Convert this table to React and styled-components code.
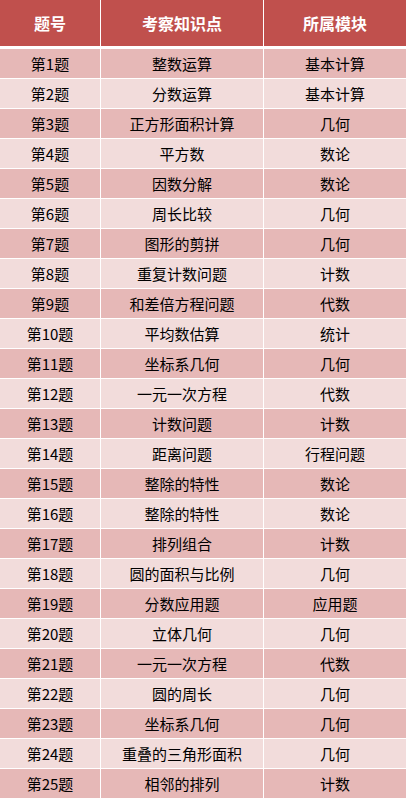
import React from "react";
import styled, { createGlobalStyle } from "styled-components";

const GlobalStyle = createGlobalStyle`
	body {
		margin: 0;
		background: #ffffff;
		font-family: "Noto Sans CJK SC", "Noto Sans", sans-serif;
	}
`;

const Table = styled.div`
	width: 406px;
	display: grid;
	grid-template-columns: 100px 162px 142px;
	column-gap: 1px;
	row-gap: 1px;
	background: #ffffff;
`;

const HeadCell = styled.div`
	height: 46px;
	margin-bottom: 2px;
	display: flex;
	align-items: center;
	justify-content: center;
	background: #c0504d;
	color: #ffffff;
	font-size: 16px;
	font-weight: 700;
`;

const Cell = styled.div`
	height: 29px;
	display: flex;
	align-items: center;
	justify-content: center;
	background: ${props => (props.odd ? "#e6b8b7" : "#f2dcdb")};
	color: #000000;
	font-size: 15px;
`;

const rows = [
	["整数运算", "基本计算"],
	["分数运算", "基本计算"],
	["正方形面积计算", "几何"],
	["平方数", "数论"],
	["因数分解", "数论"],
	["周长比较", "几何"],
	["图形的剪拼", "几何"],
	["重复计数问题", "计数"],
	["和差倍方程问题", "代数"],
	["平均数估算", "统计"],
	["坐标系几何", "几何"],
	["一元一次方程", "代数"],
	["计数问题", "计数"],
	["距离问题", "行程问题"],
	["整除的特性", "数论"],
	["整除的特性", "数论"],
	["排列组合", "计数"],
	["圆的面积与比例", "几何"],
	["分数应用题", "应用题"],
	["立体几何", "几何"],
	["一元一次方程", "代数"],
	["圆的周长", "几何"],
	["坐标系几何", "几何"],
	["重叠的三角形面积", "几何"],
	["相邻的排列", "计数"],
];

export default function App() {
	return (
		<>
			<GlobalStyle />
			<Table>
				<HeadCell>题号</HeadCell>
				<HeadCell>考察知识点</HeadCell>
				<HeadCell>所属模块</HeadCell>
				{rows.map(([topic, module], i) => (
					<React.Fragment key={i}>
						<Cell odd={i % 2 === 0}>第{i + 1}题</Cell>
						<Cell odd={i % 2 === 0}>{topic}</Cell>
						<Cell odd={i % 2 === 0}>{module}</Cell>
					</React.Fragment>
				))}
			</Table>
		</>
	);
}
